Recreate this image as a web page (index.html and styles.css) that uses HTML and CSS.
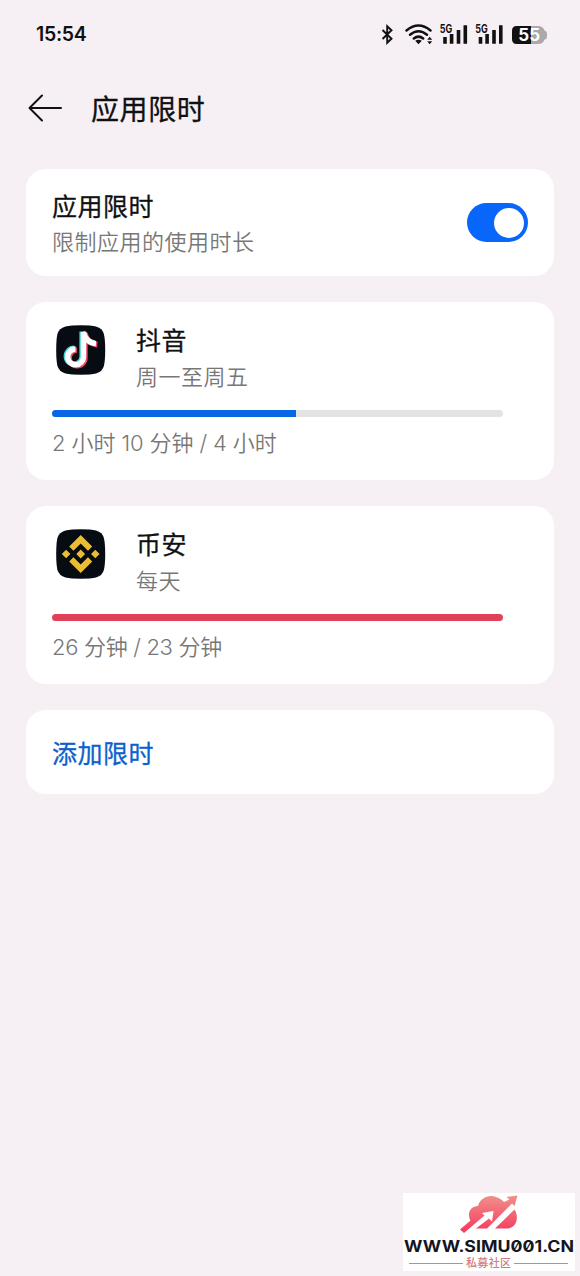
FILE: index.html
```html
<!DOCTYPE html>
<html lang="zh-CN">
<head>
<meta charset="utf-8">
<title>应用限时</title>
<link rel="stylesheet" href="styles.css">
</head>
<body>
<div class="screen">
  <div class="status">
    <span class="clock">15:54</span>
    <svg class="status-icons" width="170" height="28" viewBox="380 20 170 28">
      <path class="bt" d="M382.500 30 391.500 38.800 387.200 42.800V26.200L391.500 30.200 382.500 39"/>
      <g class="wifi">
        <path d="M406.500 30.500Q418.500 20.500 430.500 30.500"/>
        <path d="M410 34.800Q418.500 27.800 427 34.800"/>
        <path d="M413.800 38.500Q418.500 34.800 423.200 38.500"/>
      </g>
      <path d="M415.200 40.800Q418.500 38.600 421.800 40.800L418.500 44.200Z"/>
      <path d="M427.200 39.800 429.700 36.800 432.200 39.800ZM427.200 41.300 429.700 44.200 432.200 41.300Z"/>
      <text class="net" x="439.800" y="32.800" textLength="12.500" lengthAdjust="spacingAndGlyphs">5G</text>
      <path class="bars" d="M445 37V43.700M451.600 34V43.700M458.500 30V43.700M465.300 25.200V43.700"/>
      <text class="net" x="475.300" y="32.800" textLength="12.500" lengthAdjust="spacingAndGlyphs">5G</text>
      <path class="bars" d="M480.500 37V43.700M487.100 34V43.700M494 30V43.700M500.800 25.200V43.700"/>
      <path class="battery-empty" d="M517 26H538Q543 26 544.500 30.500Q547 31 547 33.500V36.500Q547 39 544.500 39.500Q543 44 538 44H517Q512 44 512 39V31Q512 26 517 26Z"/>
      <path d="M531 26H517Q512 26 512 31V39Q512 44 517 44H531Z"/>
      <text class="level" x="529.200" y="41" text-anchor="middle">55</text>
    </svg>
  </div>

  <header class="header">
    <svg width="36" height="30" viewBox="0 0 36 30"><path class="back" d="M34 15H2.500M15 2.500 2.500 15 15 27.500"/></svg>
    <h1 class="page-title">应用限时</h1>
  </header>

  <main class="cards">
    <section class="card card-switch">
      <div>
        <h2 class="title">应用限时</h2>
        <p class="sub">限制应用的使用时长</p>
      </div>
      <div class="toggle"><span class="knob"></span></div>
    </section>

    <section class="card card-app">
      <div class="app">
        <svg class="app-icon" width="50" height="50" viewBox="0 0 50 50">
          <path class="tile" d="M25 0.300Q35 .300 40 1.500Q46.500 3.200 48 9.500Q49.200 15 49.200 25T48 40.500Q46.500 46.800 40 48.500Q35 49.700 25 49.700T9.500 48.500Q3 46.800 1.300 40.500Q.200 35 .200 25T1.300 9.500Q3 3.200 9.500 1.500Q15 .300 25 .300Z"/>
          <g transform="translate(-1.300 -.6)"><path class="note note-cyan" d="M27.500 7V31.800A7.900 7.900 0 1 1 19.500 24M27.500 7C28.800 13.500 32.500 18 40 18.600"/></g>
          <g transform="translate(1.400 1)"><path class="note note-red" d="M27.500 7V31.800A7.900 7.900 0 1 1 19.500 24M27.500 7C28.800 13.500 32.500 18 40 18.600"/></g>
          <path class="note note-white" d="M27.500 7V31.800A7.900 7.900 0 1 1 19.500 24M27.500 7C28.800 13.500 32.500 18 40 18.600"/>
        </svg>
        <div>
          <h2 class="title">抖音</h2>
          <p class="sub">周一至周五</p>
        </div>
      </div>
      <div class="track"><div class="fill" style="width:54.100%"></div></div>
      <p class="usage">2 小时 10 分钟 / 4 小时</p>
    </section>

    <section class="card card-app">
      <div class="app">
        <svg class="app-icon" width="50" height="50" viewBox="0 0 50 50">
          <path class="tile" d="M25 0.300Q35 .300 40 1.500Q46.500 3.200 48 9.500Q49.200 15 49.200 25T48 40.500Q46.500 46.800 40 48.500Q35 49.700 25 49.700T9.500 48.500Q3 46.800 1.300 40.500Q.200 35 .200 25T1.300 9.500Q3 3.200 9.500 1.500Q15 .300 25 .300Z"/>
          <path class="gold" d="M24.700 6 36.200 17.500 32 21.700 24.700 14.400 17.400 21.700 13.200 17.500ZM24.700 44 36.200 32.500 32 28.300 24.700 35.600 17.400 28.300 13.200 32.500ZM24.700 20.600 29.100 25 24.700 29.400 20.300 25ZM10.100 20.700 14.400 25 10.100 29.300 5.800 25ZM39.300 20.700 43.600 25 39.300 29.300 35 25Z"/>
        </svg>
        <div>
          <h2 class="title">币安</h2>
          <p class="sub">每天</p>
        </div>
      </div>
      <div class="track"><div class="fill fill-over" style="width:100%"></div></div>
      <p class="usage usage-tight">26 分钟 / 23 分钟</p>
    </section>

    <section class="card card-add"><a class="title add">添加限时</a></section>
  </main>

  <svg class="watermark" width="172" height="78" viewBox="0 0 172 78">
    <defs><linearGradient id="cloud" gradientUnits="userSpaceOnUse" x1="0" y1="2" x2="0" y2="38"><stop offset="0" stop-color="#ef928b"/><stop offset="1" stop-color="#f63d5f"/></linearGradient></defs>
    <rect width="172" height="78" fill="#fff"/>
    <path fill="url(#cloud)" d="M57 36.500 67.500 27.500C63.500 20 68 13 75 13C77 5 86 1 93 4C97 5 99 7 101 9L106.500 6.500 103.500 4 114.500 2.500 111.500 13 109 10.500 84 35.500H73L86 25.500 89 28.500 90.500 18 79 20 81.500 22.500 61 40Z"/>
    <path fill="url(#cloud)" d="M92 35.500 111.500 16.500C116 23 114.500 35.500 103 35.500Z"/>
    <text class="site" x="1" y="59" textLength="170" lengthAdjust="spacingAndGlyphs">WWW.SIMU001.CN</text>
    <path d="M6 70.500H60M111 70.500H165" stroke="#cf8486" stroke-width="1.200"/>
    <text class="site-sub" x="63" y="74" textLength="45">私募社区</text>
  </svg>
</div>
</body>
</html>
```
FILE: styles.css
```css
* { box-sizing: border-box; }
body, h1, h2, p { margin: 0; }
body { background: #f6f0f5; color: #111; font-family: Inter, "Noto Sans CJK SC", sans-serif; }
svg { display: block; flex: none; }

.screen {
  width: 580px; height: 1276px;
  display: flex; flex-direction: column;
  position: relative; overflow: hidden;
}
.status {
  height: 68px; padding: 0 30px 0 36px;
  display: flex; align-items: center; justify-content: space-between;
}
.clock { font-size: 19.5px; font-weight: 600; line-height: 28px; letter-spacing: -.3px; }
.status-icons { fill: #111; }
.bt { fill: none; stroke: #111; stroke-width: 1.9; }
.wifi { fill: none; stroke: #111; stroke-width: 2.5; stroke-linecap: round; }
.bars { stroke: #111; stroke-width: 3.600; }
.net { font-size: 11.5px; font-weight: 700; }
.battery-empty { fill: #aaa8aa; }
.level { font-size: 17px; font-weight: 700; fill: #fff; }

.header { height: 101px; padding: 25px 27px 0; display: flex; gap: 28px; align-items: flex-start; }
.back { fill: none; stroke: #111; stroke-width: 2; stroke-linecap: round; stroke-linejoin: round; }
.page-title { font-size: 28px; font-weight: 400; line-height: 34px; letter-spacing: .6px; -webkit-text-stroke: .3px #111; }

.cards { padding: 0 26px; display: flex; flex-direction: column; gap: 26px; }
.card { background: #fff; border-radius: 20px; padding: 0 26px; }
.card-switch { height: 107px; display: flex; align-items: center; justify-content: space-between; }
.title { font-size: 25px; font-weight: 400; line-height: 38px; letter-spacing: .5px; -webkit-text-stroke: .3px currentColor; }
.card-switch .title { padding-top: 3px; line-height: 36px; }
.sub { color: #777; font-size: 22px; font-weight: 350; line-height: 34px; letter-spacing: .5px; }
.toggle {
  width: 61px; height: 39px; border-radius: 20px; background: #0866fa;
  display: flex; justify-content: flex-end; align-items: center; padding-right: 4px;
}
.knob { width: 30px; height: 30px; border-radius: 50%; background: #fff; }

.card-app { height: 178px; padding-top: 20px; }
.app { display: flex; gap: 30px; padding-left: 4px; height: 88px; }
.app-icon { margin-top: 3px; }
.tile { fill: #070b12; }
.note { fill: none; stroke-width: 5.600; stroke-linejoin: round; }
.note-cyan { stroke: #49d5d3; }
.note-red { stroke: #ea4866; }
.note-white { stroke: #fff; stroke-width: 5.400; }
.gold { fill: #eabd32; }
.track { width: 451px; height: 7px; border-radius: 4px; background: #e3e3e3; overflow: hidden; }
.fill { height: 100%; background: #0865e4; }
.fill-over { background: #e04358; }
.usage { margin-top: 9px; color: #777; font-size: 22px; font-weight: 350; line-height: 34px; letter-spacing: -.1px; }
.usage-tight { letter-spacing: -.32px; }

.card-add { height: 84px; display: flex; align-items: center; padding-top: 3px; }
.add { color: #0b61cd; }

.watermark { position: absolute; left: 403px; top: 1193px; }
.site { font-size: 15.500px; font-weight: 700; font-feature-settings: "zero"; fill: #15151f; }
.site-sub { font-size: 11px; font-weight: 500; fill: #cf7e82; }
```
